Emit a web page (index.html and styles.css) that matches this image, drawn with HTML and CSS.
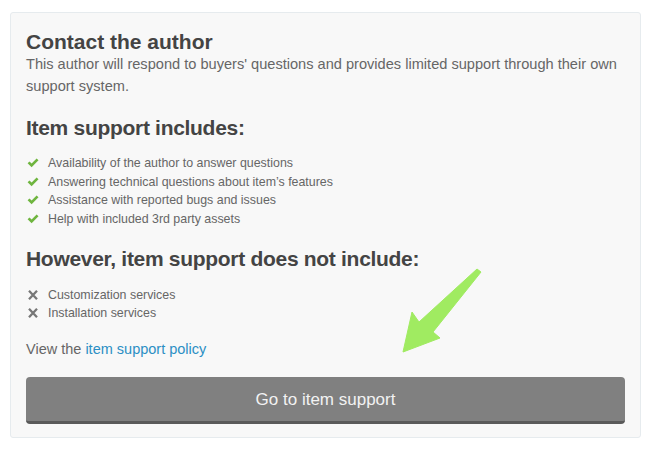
FILE: index.html
```html
<!DOCTYPE html>
<html>
<head>
<meta charset="utf-8">
<link rel="stylesheet" href="styles.css">
</head>
<body>
<div class="card">
  <h2 class="title">Contact the author</h2>
  <p class="lead">This author will respond to buyers' questions and provides limited support through their own support system.</p>

  <h3 class="section">Item support includes:</h3>
  <ul class="list">
    <li><svg class="ico" viewBox="0 0 12 10"><path d="M0.6 5.2 L2.5 3.4 L4.6 5.5 L9.6 0.5 L11.5 2.3 L4.6 9.2 Z" fill="#6fb53f"/></svg>Availability of the author to answer questions</li>
    <li><svg class="ico" viewBox="0 0 12 10"><path d="M0.6 5.2 L2.5 3.4 L4.6 5.5 L9.6 0.5 L11.5 2.3 L4.6 9.2 Z" fill="#6fb53f"/></svg>Answering technical questions about item’s features</li>
    <li><svg class="ico" viewBox="0 0 12 10"><path d="M0.6 5.2 L2.5 3.4 L4.6 5.5 L9.6 0.5 L11.5 2.3 L4.6 9.2 Z" fill="#6fb53f"/></svg>Assistance with reported bugs and issues</li>
    <li><svg class="ico" viewBox="0 0 12 10"><path d="M0.6 5.2 L2.5 3.4 L4.6 5.5 L9.6 0.5 L11.5 2.3 L4.6 9.2 Z" fill="#6fb53f"/></svg>Help with included 3rd party assets</li>
  </ul>

  <h3 class="section section-2">However, item support does not include:</h3>
  <ul class="list list-x">
    <li><svg class="ico" viewBox="0 0 12 10"><path d="M2 0.8 L10 9.2 M10 0.8 L2 9.2" stroke="#777" stroke-width="2.3" fill="none"/></svg>Customization services</li>
    <li><svg class="ico" viewBox="0 0 12 10"><path d="M2 0.8 L10 9.2 M10 0.8 L2 9.2" stroke="#777" stroke-width="2.3" fill="none"/></svg>Installation services</li>
  </ul>

  <p class="policy">View the <a href="#">item support policy</a></p>

  <a class="btn" href="#">Go to item support</a>
</div>
<svg class="arrow" width="663" height="454" viewBox="0 0 663 454">
  <polygon points="477,269 481,272 433,332 440,338 403,352 412,312 419,322" fill="#a0eb61" stroke="#a0eb61" stroke-width="1" stroke-linejoin="round"/>
</svg>
</body>
</html>
```

FILE: styles.css
```css
html, body {
  margin: 0;
  padding: 0;
  background: #ffffff;
}
body {
  font-family: "Liberation Sans", Arial, sans-serif;
  color: #666;
  position: relative;
  width: 663px;
  height: 454px;
  overflow: hidden;
}
.card {
  margin: 12px 22px 0 10px;
  background: #f8f8f8;
  border: 1px solid #e6ebee;
  border-radius: 3px;
  padding: 18px 15px 13px 15px;
}
.title {
  margin: 0;
  font-size: 21px;
  line-height: 22px;
  font-weight: bold;
  color: #444;
}
.lead {
  margin: 0;
  font-size: 14.6px;
  line-height: 22px;
  color: #666;
}
.section {
  margin: 18px 0 0 0;
  font-size: 21px;
  line-height: 26px;
  letter-spacing: -0.3px;
  font-weight: bold;
  color: #444;
}
.section-2 {
  margin-top: 18px;
}
.list {
  list-style: none;
  margin: 13px 0 0 0;
  padding: 0;
  font-size: 12.4px;
  line-height: 18.6px;
  color: #666;
}
.list-x {
  margin-top: 14px;
  line-height: 18px;
}
.list li {
  display: flex;
  align-items: center;
}
.ico {
  width: 12px;
  height: 10px;
  margin: 0 9px 0 1px;
  flex: none;
}
.policy {
  margin: 16px 0 0 0;
  font-size: 14.5px;
  line-height: 22px;
  color: #666;
}
.policy a {
  color: #2b8fc4;
  text-decoration: none;
}
.btn {
  display: flex;
  align-items: center;
  justify-content: center;
  margin-top: 17px;
  height: 42px;
  padding-top: 2px;
  background: #808080;
  border-bottom: 3px solid #5a5a5a;
  border-radius: 4px;
  color: #f2f2f2;
  font-size: 17px;
  text-decoration: none;
}
.arrow {
  position: absolute;
  left: 0;
  top: 0;
  pointer-events: none;
}
```
